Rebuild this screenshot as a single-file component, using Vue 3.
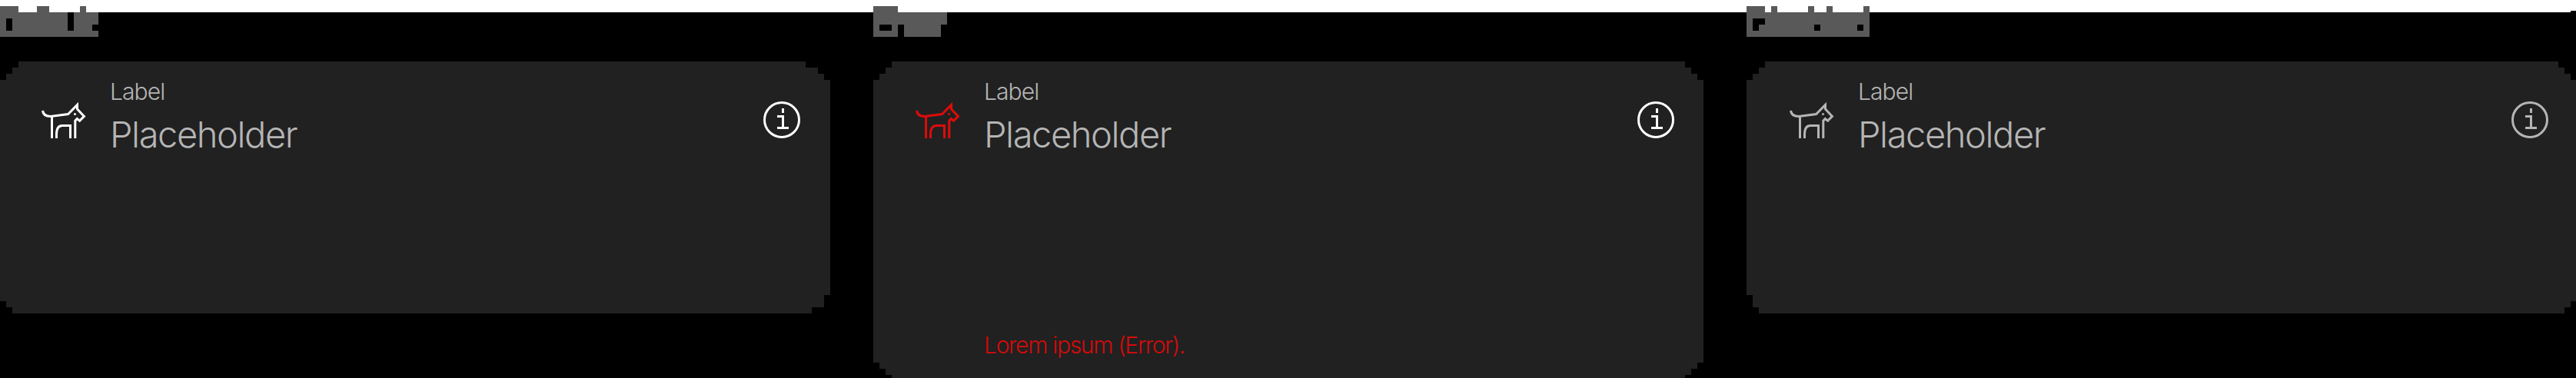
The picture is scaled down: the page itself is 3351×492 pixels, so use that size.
<script setup>
const fields = [
  {
    state: 'default',
    caption: 'M0 8h24v8h24v-8h16v8h40v-8h8v8h16v16h-8v8h8v8H0zM8 24v16h8V24zM88 16v24h8V16z',
  },
  {
    state: 'error',
    caption: 'M0 8h32v8h64v16h-8v16H40V32h-8v16H0zM8 32v8h16v-8z',
    message: 'Lorem ipsum (Error).',
  },
  {
    state: 'disabled',
    caption: 'M0 8h24v8h8v-8h8v8h40v-8h8v8h16v-8h8v8h40v-8h8v40H0zM8 24v16h8v-8h8v-8zM88 32v8h8v-8zM144 32v8h8v-8z',
  },
]
</script>

<template>
  <main class="board">
    <div class="strip"><i class="notch"></i></div>
    <div class="row">
      <section v-for="f in fields" :key="f.state" class="column" :class="f.state">
        <svg class="caption" width="160" height="48" viewBox="0 0 160 48">
          <path :d="f.caption" fill="#595959" fill-rule="evenodd" />
        </svg>
        <div class="card">
          <div class="field">
            <svg class="dog" width="60" height="50" viewBox="54 132 60 50" fill="none" stroke="currentColor" stroke-width="3">
              <path d="M55.5 144C56 149 60 151.5 66 151.5L88.6 148.5L100.5 136.5V142L109.4 151.4L103.6 157.2L100.3 154.6L97.8 157.1V180M67.5 151.5V180M73.5 180V175C73.5 168 76 163.5 81 163.5H91.5V180" />
              <circle cx="97.5" cy="148.5" r="1.5" fill="currentColor" stroke="none" />
            </svg>
            <div class="texts">
              <span class="label">Label</span>
              <span class="value">Placeholder</span>
            </div>
            <svg class="info" width="48" height="48" viewBox="0 0 48 48" fill="none" stroke="currentColor" stroke-width="3">
              <circle cx="24" cy="24" r="22.5" />
              <path d="M25.5 9V15M18 19.5H25.5V34.5M18 34.5H33" />
            </svg>
          </div>
          <p v-if="f.message" class="message">{{ f.message }}</p>
        </div>
      </section>
    </div>
  </main>
</template>

<style>
body {
  margin: 0;
  background: #000;
}
</style>

<style scoped>
.board {
  width: 3351px;
  height: 492px;
  overflow: hidden;
  background: #000;
  font-family: Inter, "Liberation Sans", sans-serif;
  font-weight: 300;
}
.strip {
  display: flex;
  justify-content: flex-end;
  align-items: flex-end;
  height: 16px;
  background: #fff;
}
.notch {
  width: 7px;
  height: 2px;
  background: #000;
}
.row {
  display: grid;
  grid-template-columns: repeat(3, 1080px);
  column-gap: 56px;
  margin-top: -16px;
}
.column {
  position: relative;
  --shift: 0px;
  --icon: #fff;
  --info: #fff;
}
.caption {
  display: block;
  margin-bottom: 32px;
}
.card {
  box-sizing: border-box;
  height: 328px;
  padding-left: calc(54px + var(--shift));
  background: #212121;
}
.default .card {
  clip-path: polygon(24px 0, 1048px 0, 1048px 8px, 1064px 8px, 1064px 16px, 1072px 16px, 1072px 24px, 1080px 24px, 1080px 304px, 1072px 304px, 1072px 320px, 1056px 320px, 1056px 328px, 16px 328px, 16px 320px, 8px 320px, 8px 312px, 0 312px, 0 24px, 8px 24px, 8px 16px, 16px 16px, 16px 8px, 24px 8px);
}
.error {
  --shift: 1px;
  --icon: #de0b0b;
}
.error .card {
  height: 412px;
  clip-path: polygon(24px 0, 1056px 0, 1056px 8px, 1064px 8px, 1064px 16px, 1072px 16px, 1072px 24px, 1080px 24px, 1080px 392px, 1072px 392px, 1072px 400px, 1064px 400px, 1064px 408px, 1056px 408px, 1056px 412px, 24px 412px, 24px 408px, 16px 408px, 16px 400px, 8px 400px, 8px 392px, 0 392px, 0 24px, 8px 24px, 8px 16px, 16px 16px, 16px 8px, 24px 8px);
}
.disabled {
  --shift: 2px;
  --icon: #b5b5b5;
  --info: #b5b5b5;
}
.disabled .card {
  clip-path: polygon(24px 0, 1056px 0, 1056px 8px, 1064px 8px, 1064px 16px, 1072px 16px, 1072px 24px, 1080px 24px, 1080px 312px, 1072px 312px, 1072px 320px, 1064px 320px, 1064px 328px, 16px 328px, 16px 320px, 8px 320px, 8px 304px, 0 304px, 0 24px, 8px 24px, 8px 16px, 16px 16px, 16px 8px, 24px 8px);
}
.field {
  display: flex;
  width: 987px;
  height: 328px;
}
.dog {
  flex: none;
  margin-top: 52px;
  color: var(--icon);
}
.texts {
  display: flex;
  flex-direction: column;
  flex: 1;
  padding: 21px 0 0 29px;
  color: #b5b5b5;
  white-space: nowrap;
}
.label {
  font-size: 30px;
  line-height: 36px;
  letter-spacing: -0.9px;
}
.value {
  margin-top: 10px;
  font-size: 47px;
  line-height: 56px;
  letter-spacing: -1.4px;
}
.info {
  flex: none;
  margin-top: 52px;
  color: var(--info);
}
.message {
  margin: 23px 0 0 89px;
  color: #d60a0a;
  font-size: 30px;
  line-height: 36px;
  letter-spacing: -1.3px;
  white-space: nowrap;
}
</style>
